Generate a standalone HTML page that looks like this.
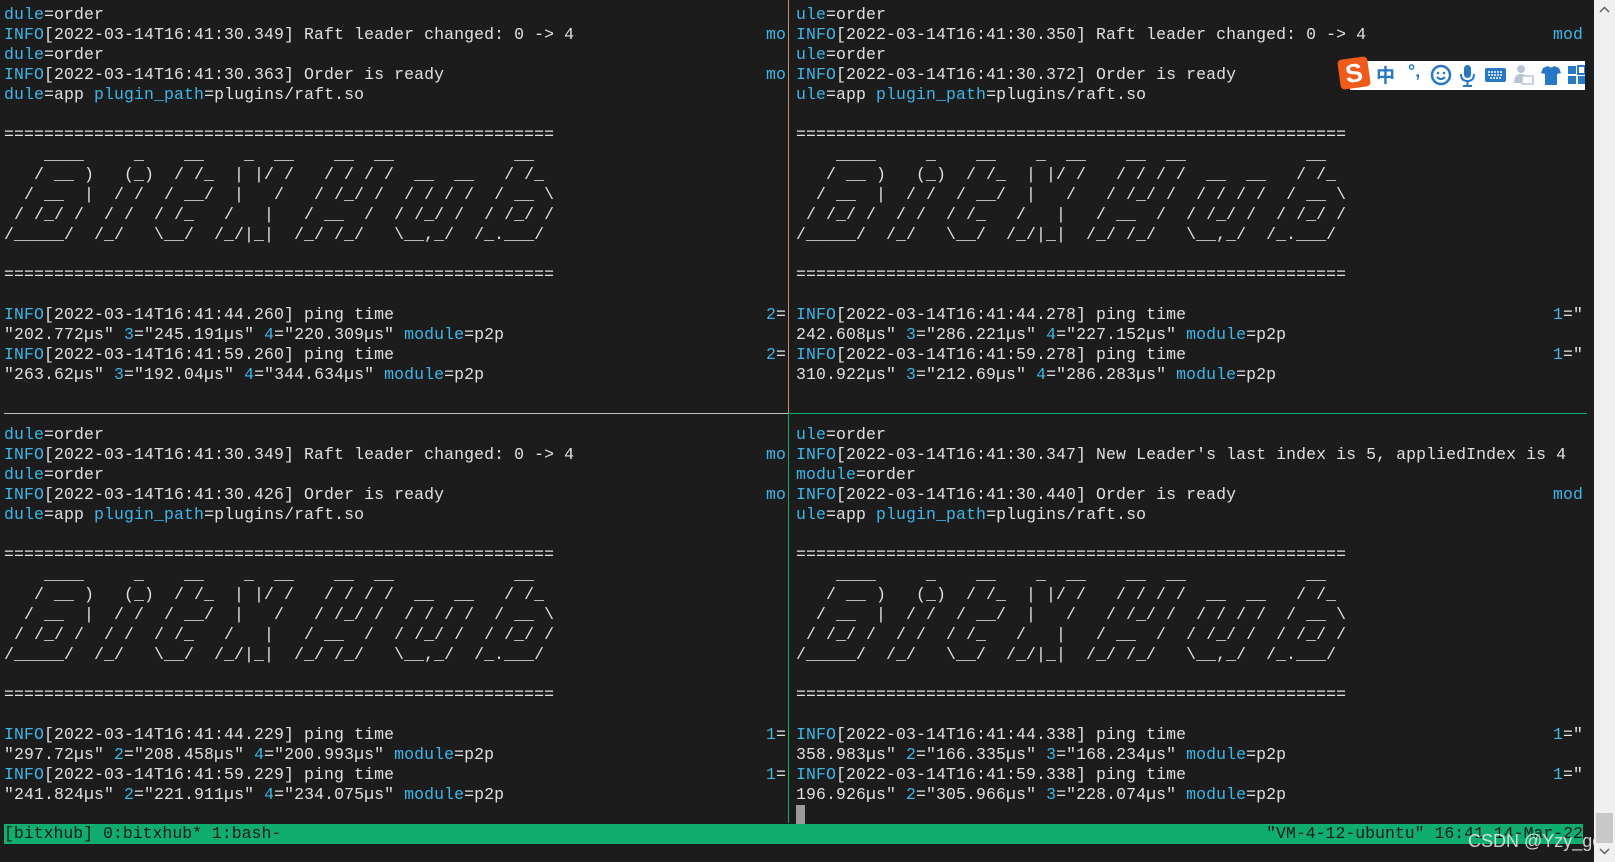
<!DOCTYPE html>
<html><head><meta charset="utf-8">
<style>
html,body{margin:0;padding:0;}
body{width:1615px;height:862px;background:#1c1c1c;overflow:hidden;position:relative;font-family:"Liberation Mono","DejaVu Sans Mono",monospace;font-size:16.5px;color:#e0e0e0;}
.pane{position:absolute;top:5px;line-height:20px;letter-spacing:0.1px;}
.row{position:relative;height:20px;white-space:pre;}
.c{color:#3db6e8;}
.r{position:absolute;top:0;}
.vl{position:absolute;left:788px;width:1px;}
#scroll{position:absolute;left:1594px;top:0;width:21px;height:862px;background:#f0f0f0;}
#status{position:absolute;left:4px;top:824px;width:1579px;height:20px;background:#10ae6e;color:#1a1a1a;white-space:pre;line-height:20px;}
</style></head><body>

<div class="pane" style="left:4px"><div class="row"><span class="c">dule</span>=order</div><div class="row"><span class="c">INFO</span>[2022-03-14T16:41:30.349] Raft leader changed: 0 -&gt; 4<span class="r c" style="left:762px">mo</span></div><div class="row"><span class="c">dule</span>=order</div><div class="row"><span class="c">INFO</span>[2022-03-14T16:41:30.363] Order is ready<span class="r c" style="left:762px">mo</span></div><div class="row"><span class="c">dule</span>=app <span class="c">plugin_path</span>=plugins/raft.so</div><div class="row"> </div><div class="row">=======================================================</div><div class="row">    ____     _    __    _  __    __  __            __</div><div class="row">   / __ )   (_)  / /_  | |/ /   / / / /  __  __   / /_</div><div class="row">  / __  |  / /  / __/  |   /   / /_/ /  / / / /  / __ \</div><div class="row"> / /_/ /  / /  / /_   /   |   / __  /  / /_/ /  / /_/ /</div><div class="row">/_____/  /_/   \__/  /_/|_|  /_/ /_/   \__,_/  /_.___/</div><div class="row"> </div><div class="row">=======================================================</div><div class="row"> </div><div class="row"><span class="c">INFO</span>[2022-03-14T16:41:44.260] ping time<span class="r" style="left:762px"><span class="c">2</span>=</span></div><div class="row">"202.772µs" <span class="c">3</span>="245.191µs" <span class="c">4</span>="220.309µs" <span class="c">module</span>=p2p</div><div class="row"><span class="c">INFO</span>[2022-03-14T16:41:59.260] ping time<span class="r" style="left:762px"><span class="c">2</span>=</span></div><div class="row">"263.62µs" <span class="c">3</span>="192.04µs" <span class="c">4</span>="344.634µs" <span class="c">module</span>=p2p</div><div class="row"> </div><div class="row"> </div><div class="row"><span class="c">dule</span>=order</div><div class="row"><span class="c">INFO</span>[2022-03-14T16:41:30.349] Raft leader changed: 0 -&gt; 4<span class="r c" style="left:762px">mo</span></div><div class="row"><span class="c">dule</span>=order</div><div class="row"><span class="c">INFO</span>[2022-03-14T16:41:30.426] Order is ready<span class="r c" style="left:762px">mo</span></div><div class="row"><span class="c">dule</span>=app <span class="c">plugin_path</span>=plugins/raft.so</div><div class="row"> </div><div class="row">=======================================================</div><div class="row">    ____     _    __    _  __    __  __            __</div><div class="row">   / __ )   (_)  / /_  | |/ /   / / / /  __  __   / /_</div><div class="row">  / __  |  / /  / __/  |   /   / /_/ /  / / / /  / __ \</div><div class="row"> / /_/ /  / /  / /_   /   |   / __  /  / /_/ /  / /_/ /</div><div class="row">/_____/  /_/   \__/  /_/|_|  /_/ /_/   \__,_/  /_.___/</div><div class="row"> </div><div class="row">=======================================================</div><div class="row"> </div><div class="row"><span class="c">INFO</span>[2022-03-14T16:41:44.229] ping time<span class="r" style="left:762px"><span class="c">1</span>=</span></div><div class="row">"297.72µs" <span class="c">2</span>="208.458µs" <span class="c">4</span>="200.993µs" <span class="c">module</span>=p2p</div><div class="row"><span class="c">INFO</span>[2022-03-14T16:41:59.229] ping time<span class="r" style="left:762px"><span class="c">1</span>=</span></div><div class="row">"241.824µs" <span class="c">2</span>="221.911µs" <span class="c">4</span>="234.075µs" <span class="c">module</span>=p2p</div></div>

<div class="pane" style="left:796px"><div class="row"><span class="c">ule</span>=order</div><div class="row"><span class="c">INFO</span>[2022-03-14T16:41:30.350] Raft leader changed: 0 -&gt; 4<span class="r c" style="left:757px">mod</span></div><div class="row"><span class="c">ule</span>=order</div><div class="row"><span class="c">INFO</span>[2022-03-14T16:41:30.372] Order is ready</div><div class="row"><span class="c">ule</span>=app <span class="c">plugin_path</span>=plugins/raft.so</div><div class="row"> </div><div class="row">=======================================================</div><div class="row">    ____     _    __    _  __    __  __            __</div><div class="row">   / __ )   (_)  / /_  | |/ /   / / / /  __  __   / /_</div><div class="row">  / __  |  / /  / __/  |   /   / /_/ /  / / / /  / __ \</div><div class="row"> / /_/ /  / /  / /_   /   |   / __  /  / /_/ /  / /_/ /</div><div class="row">/_____/  /_/   \__/  /_/|_|  /_/ /_/   \__,_/  /_.___/</div><div class="row"> </div><div class="row">=======================================================</div><div class="row"> </div><div class="row"><span class="c">INFO</span>[2022-03-14T16:41:44.278] ping time<span class="r" style="left:757px"><span class="c">1</span>="</span></div><div class="row">242.608µs" <span class="c">3</span>="286.221µs" <span class="c">4</span>="227.152µs" <span class="c">module</span>=p2p</div><div class="row"><span class="c">INFO</span>[2022-03-14T16:41:59.278] ping time<span class="r" style="left:757px"><span class="c">1</span>="</span></div><div class="row">310.922µs" <span class="c">3</span>="212.69µs" <span class="c">4</span>="286.283µs" <span class="c">module</span>=p2p</div><div class="row"> </div><div class="row"> </div><div class="row"><span class="c">ule</span>=order</div><div class="row"><span class="c">INFO</span>[2022-03-14T16:41:30.347] New Leader's last index is 5, appliedIndex is 4</div><div class="row"><span class="c">module</span>=order</div><div class="row"><span class="c">INFO</span>[2022-03-14T16:41:30.440] Order is ready<span class="r c" style="left:757px">mod</span></div><div class="row"><span class="c">ule</span>=app <span class="c">plugin_path</span>=plugins/raft.so</div><div class="row"> </div><div class="row">=======================================================</div><div class="row">    ____     _    __    _  __    __  __            __</div><div class="row">   / __ )   (_)  / /_  | |/ /   / / / /  __  __   / /_</div><div class="row">  / __  |  / /  / __/  |   /   / /_/ /  / / / /  / __ \</div><div class="row"> / /_/ /  / /  / /_   /   |   / __  /  / /_/ /  / /_/ /</div><div class="row">/_____/  /_/   \__/  /_/|_|  /_/ /_/   \__,_/  /_.___/</div><div class="row"> </div><div class="row">=======================================================</div><div class="row"> </div><div class="row"><span class="c">INFO</span>[2022-03-14T16:41:44.338] ping time<span class="r" style="left:757px"><span class="c">1</span>="</span></div><div class="row">358.983µs" <span class="c">2</span>="166.335µs" <span class="c">3</span>="168.234µs" <span class="c">module</span>=p2p</div><div class="row"><span class="c">INFO</span>[2022-03-14T16:41:59.338] ping time<span class="r" style="left:757px"><span class="c">1</span>="</span></div><div class="row">196.926µs" <span class="c">2</span>="305.966µs" <span class="c">3</span>="228.074µs" <span class="c">module</span>=p2p</div><div class="row"><span style="display:inline-block;width:9px;height:19px;background:#9a9a9a;vertical-align:top"></span></div></div>

<div class="vl" style="top:0;height:413px;background:#c8906e"></div>
<div class="vl" style="top:413px;height:410px;background:#10ae6e"></div>
<div style="position:absolute;left:4px;top:413px;width:784px;height:1px;background:#bdbdbd"></div>
<div style="position:absolute;left:788px;top:413px;width:799px;height:1px;background:#10ae6e"></div>

<div id="status">[bitxhub] 0:bitxhub* 1:bash-<span style="position:absolute;right:0;top:0">"VM-4-12-ubuntu" 16:41 14-Mar-22</span></div>

<div style="position:absolute;left:1468px;top:831px;white-space:nowrap;font-family:'Liberation Sans',sans-serif;font-size:18px;color:rgba(235,235,235,0.85)">CSDN @Yzy_gold</div>

<div style="position:absolute;left:1350px;top:61px;width:235px;height:29px;background:#fff"></div>
<div style="position:absolute;left:1339px;top:58px;width:30px;height:30px;background:#f05a1a;border-radius:4px;transform:rotate(-8deg);color:#fff;font:bold 26px 'Liberation Sans',sans-serif;text-align:center;line-height:30px">S</div>
<div style="position:absolute;left:1376px;top:63px;font:bold 19px 'Noto Sans CJK SC',sans-serif;color:#2878c8;line-height:24px">中</div>
<div style="position:absolute;left:1408px;top:61px;font:bold 18px 'Liberation Sans',sans-serif;color:#2878c8">°,</div>
<svg style="position:absolute;left:1430px;top:63px" width="155" height="26" viewBox="0 0 155 26">
<circle cx="11" cy="12" r="9" fill="none" stroke="#2878c8" stroke-width="2.5"/>
<circle cx="8" cy="10" r="1.3" fill="#2878c8"/><circle cx="14" cy="10" r="1.3" fill="#2878c8"/>
<path d="M7 14 Q11 18 15 14" fill="none" stroke="#2878c8" stroke-width="2"/>
<rect x="34" y="2" width="7" height="13" rx="3.5" fill="#2878c8"/>
<path d="M31 11 Q31 18 37.5 18 Q44 18 44 11 M37.5 18 V23 M33 23 H42" fill="none" stroke="#2878c8" stroke-width="2"/>
<rect x="55" y="5" width="21" height="14" rx="2" fill="#2878c8"/>
<path d="M58 9h15M58 12h15M60 15h11" stroke="#fff" stroke-width="1.5" stroke-dasharray="2 1"/>
<circle cx="91" cy="6" r="4" fill="#b8c4d4"/><path d="M84 20 Q84 11 91 11 Q98 11 98 20Z" fill="#b8c4d4"/>
<rect x="92" y="13" width="11" height="8" fill="#fff" stroke="#b8c4d4" stroke-width="1.5"/>
<path d="M113 5 L118 3 Q121 6 124 3 L129 5 L131 10 L127 11 V22 H115 V11 L111 10Z" fill="#2878c8"/>
<rect x="138" y="3" width="8" height="8" fill="#2878c8"/><rect x="148" y="3" width="7" height="8" fill="none" stroke="#2878c8" stroke-width="2"/>
<rect x="138" y="13" width="8" height="8" fill="#2878c8"/><rect x="148" y="13" width="7" height="8" fill="#2878c8"/>
</svg>

<div id="scroll">
<svg style="position:absolute;left:5px;top:6px" width="11" height="7"><path d="M1 6 L5.5 1.5 L10 6" fill="none" stroke="#606060" stroke-width="1.5"/></svg>
<div style="position:absolute;left:2px;top:813px;width:17px;height:30px;background:#c8c8c8"></div>
<svg style="position:absolute;left:5px;top:848px" width="11" height="7"><path d="M1 1 L5.5 5.5 L10 1" fill="none" stroke="#606060" stroke-width="1.5"/></svg>
</div>
</body></html>
